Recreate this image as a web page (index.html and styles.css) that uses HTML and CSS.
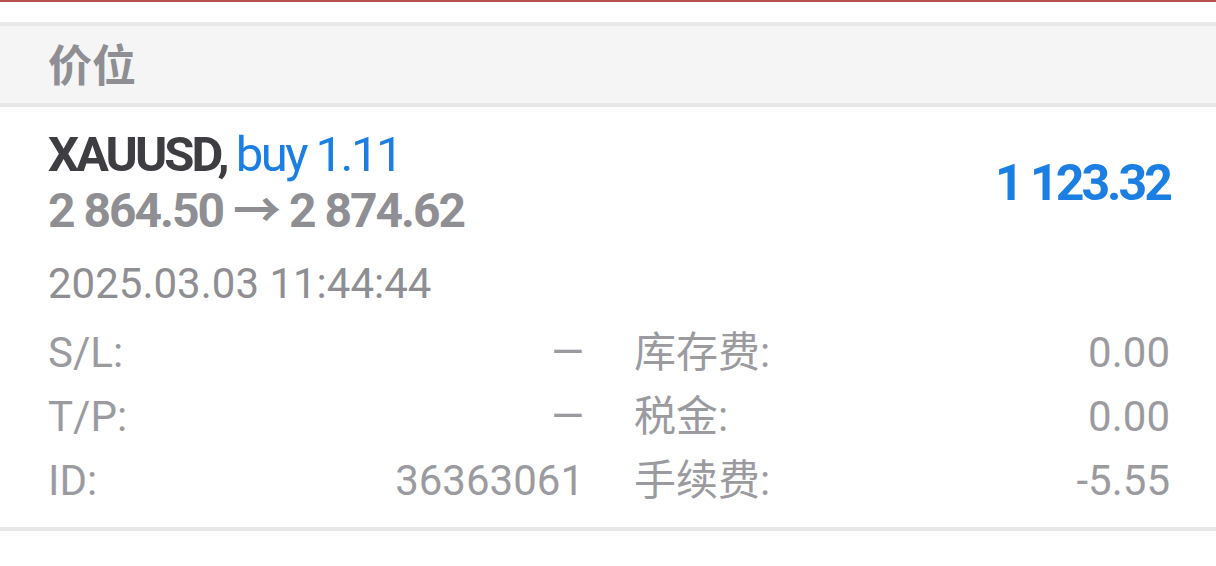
FILE: index.html
```html
<!DOCTYPE html>
<html lang="zh-CN">
<head>
    <meta charset="UTF-8">
    <meta name="viewport" content="width=device-width, initial-scale=1.0">
    <title>持仓</title>
    <link rel="stylesheet" href="styles.css">
</head>
<body>

<div class="top-line"></div>

<div class="section-head">价位</div>

<div class="position">
    <div class="position-main">
        <div class="position-info">
            <div class="symbol">XAUUSD, <span class="side">buy 1.11</span></div>
            <div class="prices">2 864.50 → 2 874.62</div>
        </div>
        <div class="profit">1 123.32</div>
    </div>
    <div class="open-time">2025.03.03 11:44:44</div>

    <div class="details">
        <div class="detail-row">
            <span class="label">S/L:</span>
            <span class="value">—</span>
        </div>
        <div class="detail-row">
            <span class="label">库存费:</span>
            <span class="value">0.00</span>
        </div>
        <div class="detail-row">
            <span class="label">T/P:</span>
            <span class="value">—</span>
        </div>
        <div class="detail-row">
            <span class="label">税金:</span>
            <span class="value">0.00</span>
        </div>
        <div class="detail-row">
            <span class="label">ID:</span>
            <span class="value">36363061</span>
        </div>
        <div class="detail-row">
            <span class="label">手续费:</span>
            <span class="value">-5.55</span>
        </div>
    </div>
</div>

</body>
</html>
```

FILE: styles.css
```css
body {
    font-family: Roboto, "Noto Sans CJK SC", sans-serif;
    background-color: #fff;
    margin: 0;
    overflow: hidden;
}

.top-line {
    height: 2px;
    background-color: #b5504c;
    margin-bottom: 20px;
}

.section-head {
    display: flex;
    align-items: center;
    padding-left: 48px;
    padding-bottom: 4px;
    box-sizing: border-box;
    height: 85px;
    background-color: #f5f5f5;
    border-top: 4px solid #e8e8e8;
    border-bottom: 4px solid #e8e8e8;
    color: #8e8e93;
    font-size: 44px;
    font-weight: bold;
}

.position {
    padding: 20px 46px 14px 48px;
    border-bottom: 4px solid #e8e8e8;
}

.position-main {
    display: flex;
    justify-content: space-between;
    align-items: center;
}

.symbol {
    font-size: 49px;
    line-height: 56px;
    font-weight: bold;
    color: #3d3d42;
    letter-spacing: -3px;
}

.side {
    font-weight: normal;
    color: #1a7ee3;
    letter-spacing: -2.5px;
}

.prices {
    font-size: 48px;
    line-height: 56px;
    font-weight: bold;
    color: #8e8e93;
    letter-spacing: -2px;
}

.profit {
    font-size: 50px;
    font-weight: bold;
    color: #1a7ee3;
    letter-spacing: -3px;
}

.open-time {
    margin-top: 20px;
    font-size: 42px;
    line-height: 50px;
    color: #8e8e93;
}

.details {
    display: grid;
    grid-template-columns: 1fr 1fr;
    column-gap: 50px;
    margin-top: 12px;
}

.detail-row {
    display: flex;
    justify-content: space-between;
    font-size: 42px;
    line-height: 64px;
    color: #9b9b9f;
}
```
